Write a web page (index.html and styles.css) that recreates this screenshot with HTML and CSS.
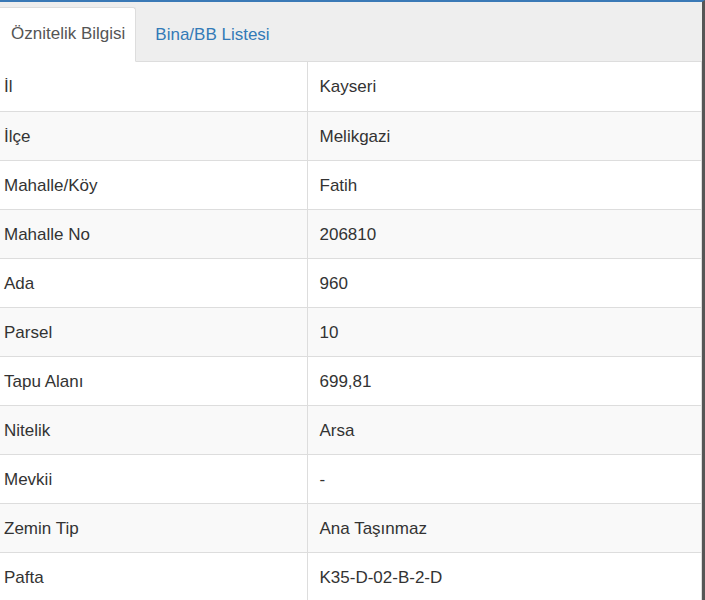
FILE: index.html
```html
<!DOCTYPE html>
<html lang="tr">

<head>
    <meta charset="UTF-8" />
    <meta name="viewport" content="width=device-width, initial-scale=1" />
    <title>Parsel Bilgisi</title>
    <link rel="stylesheet" href="styles.css">
</head>

<body>
    <div class="panel">
        <ul class="tabs">
            <li class="tab active"><a href="#oznitelik">Öznitelik Bilgisi</a></li>
            <li class="tab"><a href="#bina">Bina/BB Listesi</a></li>
        </ul>

        <table class="infotable" id="oznitelik">
            <tbody>
                <tr><td>İl</td><td>Kayseri</td></tr>
                <tr><td>İlçe</td><td>Melikgazi</td></tr>
                <tr><td>Mahalle/Köy</td><td>Fatih</td></tr>
                <tr><td>Mahalle No</td><td>206810</td></tr>
                <tr><td>Ada</td><td>960</td></tr>
                <tr><td>Parsel</td><td>10</td></tr>
                <tr><td>Tapu Alanı</td><td>699,81</td></tr>
                <tr><td>Nitelik</td><td>Arsa</td></tr>
                <tr><td>Mevkii</td><td>-</td></tr>
                <tr><td>Zemin Tip</td><td>Ana Taşınmaz</td></tr>
                <tr><td>Pafta</td><td>K35-D-02-B-2-D</td></tr>
            </tbody>
        </table>
    </div>
</body>

</html>
```

FILE: styles.css
```css
body {
    margin: 0;
    background: #fff;
    font-family: "Liberation Sans", Arial, sans-serif;
    font-size: 17px;
    line-height: 20px;
    color: #333;
}

.panel {
    width: 705px;
    height: 600px;
    box-sizing: border-box;
    border-top: 2px solid #3a79b6;
    border-right: 3px solid #565656;
    overflow: hidden;
}

/* Abas */
.tabs {
    display: flex;
    list-style: none;
    margin: 0;
    padding: 5px 0 0 0;
    height: 54px;
    background: #eee;
    border-bottom: 1px solid #ddd;
}

.tab {
    height: 55px;
    box-sizing: border-box;
    margin-bottom: -1px;
}

.tab a {
    display: block;
    height: 100%;
    box-sizing: border-box;
    padding: 17px 18px 0 18px;
    text-decoration: none;
    color: #337ab7;
    border: 1px solid transparent;
}

.tab.active a {
    padding: 16px 10px 0 11px;
    background: #fff;
    color: #555;
    border-color: #ddd;
    border-left: none;
    border-bottom-color: #fff;
    border-radius: 0 3px 0 0;
}

/* Tabela */
.infotable {
    width: 702px;
    border-collapse: collapse;
    border-right: 1px solid #ddd;
}

.infotable td {
    height: 49px;
    box-sizing: border-box;
    padding: 15px 12px 13px 12px;
    border-bottom: 1px solid #ddd;
    vertical-align: top;
}

.infotable td:first-child {
    width: 307px;
    padding-left: 4px;
    border-right: 1px solid #ddd;
}

.infotable tr:nth-child(even) td {
    background: #f9f9f9;
}
```
